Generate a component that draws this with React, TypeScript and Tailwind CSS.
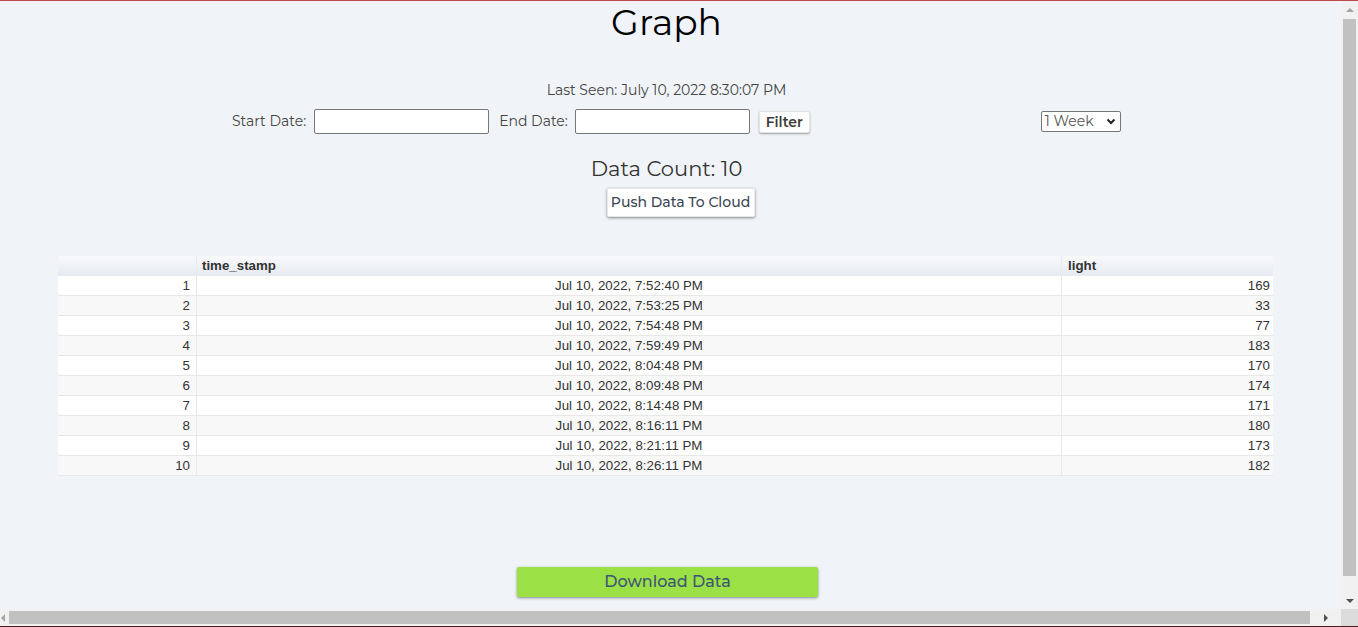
import React from 'react';

const rows = [
  { id: 1, ts: 'Jul 10, 2022, 7:52:40 PM', light: 169 },
  { id: 2, ts: 'Jul 10, 2022, 7:53:25 PM', light: 33 },
  { id: 3, ts: 'Jul 10, 2022, 7:54:48 PM', light: 77 },
  { id: 4, ts: 'Jul 10, 2022, 7:59:49 PM', light: 183 },
  { id: 5, ts: 'Jul 10, 2022, 8:04:48 PM', light: 170 },
  { id: 6, ts: 'Jul 10, 2022, 8:09:48 PM', light: 174 },
  { id: 7, ts: 'Jul 10, 2022, 8:14:48 PM', light: 171 },
  { id: 8, ts: 'Jul 10, 2022, 8:16:11 PM', light: 180 },
  { id: 9, ts: 'Jul 10, 2022, 8:21:11 PM', light: 173 },
  { id: 10, ts: 'Jul 10, 2022, 8:26:11 PM', light: 182 },
];

function Arrow({ dir, dark }: { dir: 'up' | 'down' | 'left' | 'right'; dark?: boolean }) {
  const pts = {
    up: '0,5 4,1 8,5',
    down: '0,1 4,5 8,1',
    left: '5,0 1,4 5,8',
    right: '1,0 5,4 1,8',
  }[dir];
  const vertical = dir === 'up' || dir === 'down';
  return (
    <svg width={vertical ? 8 : 6} height={vertical ? 6 : 8} viewBox={vertical ? '0 0 8 6' : '0 0 6 8'}>
      <polygon points={pts} fill={dark ? '#505050' : '#a3a3a3'} />
    </svg>
  );
}

export default function App() {
  return (
    <div className="w-[1358px] h-[627px] flex flex-col overflow-hidden border-t border-[#c24a4a] bg-[#f0f4f8] font-['Montserrat','Open_Sans',sans-serif] text-[#333]">
      <div className="flex flex-1 min-h-0">
        {/* page */}
        <main className="flex-1 flex flex-col items-center">
          <h1 className="-mt-[1px] text-[36px] leading-[44px] text-black mr-[8px]">Graph</h1>

          <p className="mt-[37px] text-[14px] leading-[18px] text-[#444] mr-[8px]">Last Seen: July 10, 2022 8:30:07 PM</p>

          <div className="mt-[10px] w-full flex items-center text-[14px] text-[#444]">
            <div className="flex items-center ml-[232px]">
              <span>Start Date:</span>
              <input className="ml-[8px] w-[175px] h-[25px] bg-white border border-[#767676] rounded-[2px]" />
              <span className="ml-[10px]">End Date:</span>
              <input className="ml-[7px] w-[175px] h-[25px] bg-white border border-[#767676] rounded-[2px]" />
              <button className="ml-[9px] w-[51px] h-[22px] bg-white border border-[#e2e2e2] rounded-[2px] shadow-[0_1px_2px_rgba(0,0,0,0.35)] text-[14px] font-semibold text-[#3a3a3a]">
                Filter
              </button>
            </div>
            <div className="ml-[231px] w-[80px] h-[21px] flex items-center justify-between border border-[#767676] rounded-[2px] bg-white px-[4px]">
              <span className="text-[14px] text-[#555] -ml-[1px]">1 Week</span>
              <svg width="10" height="7" viewBox="0 0 10 7">
                <path d="M1.5 1.5 L5 5 L8.5 1.5" stroke="#222" strokeWidth="2" fill="none" />
              </svg>
            </div>
          </div>

          <p className="mt-[23px] text-[21px] leading-[24px] text-[#333] mr-[8px]">Data Count: 10</p>
          <button className="mt-[7px] ml-[20px] w-[148px] h-[29px] bg-white border border-[#e8e8e8] rounded-[2px] shadow-[0_1px_3px_rgba(0,0,0,0.45)] text-[14px] font-medium text-[#3a4555]">
            Push Data To Cloud
          </button>

          <div className="mt-[39px] w-full pl-[58px] pr-[68px] font-['Liberation_Sans',Arial,sans-serif] text-[13.3px] text-[#333]">
            <div className="flex h-[20px] bg-gradient-to-b from-[#f8f9fb] to-[#e6eaf1] font-bold leading-[20px]">
              <div className="w-[139px] border-r border-[#e8ecf0]" />
              <div className="w-[865px] pl-[5px] border-r border-[#e8ecf0]">time_stamp</div>
              <div className="flex-1 pl-[6px]">light</div>
            </div>
            {rows.map((r, i) => (
              <div
                key={r.id}
                className={`flex h-[20px] leading-[20px] border-b border-[#e8e8e8] ${i % 2 === 0 ? 'bg-white' : 'bg-[#f8f8f8]'}`}
              >
                <div className="w-[139px] text-right pr-[6px] border-r border-[#e8e8e8]">{r.id}</div>
                <div className="w-[865px] text-center border-r border-[#e8e8e8]">{r.ts}</div>
                <div className="flex-1 text-right pr-[3px]">{r.light}</div>
              </div>
            ))}
          </div>

          <button className="mt-[91px] w-[301px] h-[30px] bg-[#9be045] rounded-[2px] shadow-[0_1px_3px_rgba(0,0,0,0.45)] text-[16px] font-medium text-[#3d5478] mr-[6px]">
            Download Data
          </button>
        </main>

        {/* vertical scrollbar */}
        <div className="w-[17px] bg-[#f1f1f1] flex flex-col items-center">
          <div className="h-[17px] flex items-center justify-center">
            <Arrow dir="up" />
          </div>
          <div className="mt-[1px] w-[13px] h-[557px] bg-[#c1c1c1]" />
          <div className="flex-1" />
          <div className="h-[17px] flex items-center justify-center">
            <Arrow dir="down" dark />
          </div>
        </div>
      </div>

      {/* horizontal scrollbar */}
      <div className="h-[17px] flex bg-[#f1f1f1]">
        <div className="w-[9px] flex items-center justify-start">
          <Arrow dir="left" />
        </div>
        <div className="my-[2px] w-[1301px] bg-[#c1c1c1]" />
        <div className="flex-1 flex items-center justify-center">
          <Arrow dir="right" dark />
        </div>
        <div className="w-[17px] bg-[#dcdcdc]" />
      </div>
      <div className="h-px bg-[#4a1c1c]" />
    </div>
  );
}
